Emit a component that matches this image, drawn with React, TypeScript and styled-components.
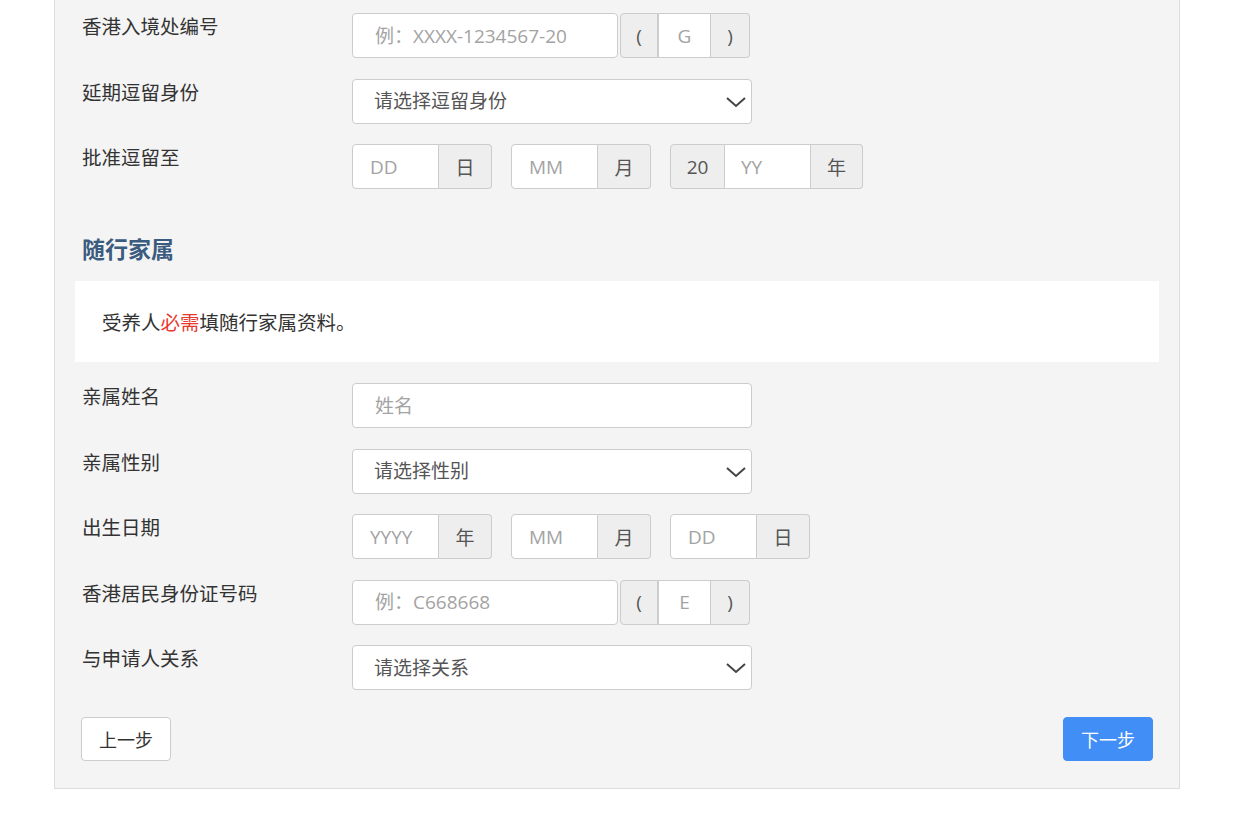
import styled, { createGlobalStyle } from 'styled-components'

const GlobalStyle = createGlobalStyle`
  html, body {
    margin: 0;
    padding: 0;
    background: #fff;
    font-family: "Open Sans", "Noto Sans CJK SC", sans-serif;
    color: #333;
  }
  * { box-sizing: border-box; }
`

const Page = styled.div`
  display: flex;
  align-items: flex-end;
  width: 1250px;
`

const Panel = styled.div`
  margin-left: 54px;
  width: 1126px;
  background: #f4f4f4;
  border: 1px solid #dddddd;
  border-top: none;
  padding: 13px 27px 27px 27px;
`

const SideLine = styled.div`
  margin-left: 7px;
  flex: 1;
  height: 1px;
  background: #eeeeee;
  margin-bottom: -1px;
`

const Row = styled.div`
  display: grid;
  grid-template-columns: 270px 1fr;
  margin-bottom: 20.5px;
`

const Label = styled.label`
  font-size: 19.5px;
  line-height: 28px;
  color: #333;
`

const Controls = styled.div<{ gap?: number }>`
  display: flex;
  align-items: center;
  gap: ${(p) => p.gap ?? 0}px;
`

const Group = styled.div`
  display: flex;
`

const Input = styled.input<{ w: number; pad?: number; center?: boolean; round?: string; noLeft?: boolean }>`
  width: ${(p) => p.w}px;
  height: 45px;
  border: 1px solid #cccccc;
  border-left: ${(p) => (p.noLeft ? 'none' : '1px solid #cccccc')};
  border-radius: ${(p) => p.round ?? '4px'};
  background: #fff;
  padding: 0 ${(p) => p.pad ?? 22}px;
  font-family: inherit;
  font-size: 19px;
  color: #555;
  text-align: ${(p) => (p.center ? 'center' : 'left')};
  outline: none;
  &::placeholder {
    color: #a3a3a3;
  }
`

const Addon = styled.span<{ w: number; round?: string; noLeft?: boolean }>`
  display: flex;
  align-items: center;
  justify-content: center;
  width: ${(p) => p.w}px;
  height: 45px;
  background: #eeeeee;
  border: 1px solid #cccccc;
  border-left: ${(p) => (p.noLeft ? 'none' : '1px solid #cccccc')};
  border-radius: ${(p) => p.round ?? '0'};
  font-size: 19px;
  color: #555;
`

const SelectWrap = styled.div`
  position: relative;
  width: 400px;
`

const Select = styled.select`
  appearance: none;
  width: 100%;
  height: 45px;
  border: 1px solid #cccccc;
  border-radius: 4px;
  background: #fff;
  padding: 0 40px 0 21px;
  font-family: inherit;
  font-size: 19px;
  color: #555;
  outline: none;
`

const Chevron = styled.svg`
  position: absolute;
  right: 3px;
  top: 15px;
  pointer-events: none;
`

const Heading = styled.h3`
  margin: 44px 0 16px 0;
  font-size: 23px;
  line-height: 32px;
  font-weight: 700;
  color: #3b5b7f;
`

const Notice = styled.div`
  margin: 0 -7px 21px -7px;
  height: 81px;
  background: #fff;
  display: flex;
  align-items: center;
  padding-left: 27px;
  font-size: 19.5px;
  color: #333;
`

const Red = styled.span`
  color: #e8392f;
`

const Footer = styled.div`
  display: flex;
  justify-content: space-between;
  padding-top: 6px;
`

const Button = styled.button<{ primary?: boolean }>`
  width: 90px;
  height: 44px;
  border-radius: 4px;
  font-family: inherit;
  font-size: 18px;
  cursor: pointer;
  border: 1px solid ${(p) => (p.primary ? '#428ef7' : '#cccccc')};
  background: ${(p) => (p.primary ? '#428ef7' : '#ffffff')};
  color: ${(p) => (p.primary ? '#ffffff' : '#333333')};
  margin-left: ${(p) => (p.primary ? '0' : '-1px')};
  margin-right: ${(p) => (p.primary ? '-1px' : '0')};
`

const Dropdown = ({ text }: { text: string }) => (
  <SelectWrap>
    <Select defaultValue=''>
      <option value=''>{text}</option>
    </Select>
    <Chevron width='26' height='16' viewBox='0 0 26 16'>
      <path d='M4 4 L13 12 L22 4' fill='none' stroke='#444' strokeWidth='2' />
    </Chevron>
  </SelectWrap>
)

const DateField = ({ placeholder, unit }: { placeholder: string; unit: string }) => (
  <Group>
    <Input w={87} pad={17} placeholder={placeholder} round='4px 0 0 4px' />
    <Addon w={53} round='0 4px 4px 0' noLeft>
      {unit}
    </Addon>
  </Group>
)

const IdField = ({ placeholder, check }: { placeholder: string; check: string }) => (
  <Controls gap={2}>
    <Input w={266} placeholder={placeholder} />
    <Group>
      <Addon w={38} round='4px 0 0 4px'>(</Addon>
      <Input w={53} pad={0} center placeholder={check} round='0' />
      <Addon w={39} round='0 4px 4px 0' noLeft>)</Addon>
    </Group>
  </Controls>
)

export default function App() {
  return (
    <>
      <GlobalStyle />
      <Page>
        <Panel>
          <Row>
            <Label>香港入境处编号</Label>
            <IdField placeholder='例：XXXX-1234567-20' check='G' />
          </Row>
          <Row>
            <Label>延期逗留身份</Label>
            <Dropdown text='请选择逗留身份' />
          </Row>
          <Row>
            <Label>批准逗留至</Label>
            <Controls gap={19}>
              <DateField placeholder='DD' unit='日' />
              <DateField placeholder='MM' unit='月' />
              <Group>
                <Addon w={55} round='4px 0 0 4px'>20</Addon>
                <Input w={86} pad={16} placeholder='YY' round='0' noLeft />
                <Addon w={52} round='0 4px 4px 0' noLeft>年</Addon>
              </Group>
            </Controls>
          </Row>

          <Heading>随行家属</Heading>
          <Notice>
            受养人<Red>必需</Red>填随行家属资料。
          </Notice>

          <Row>
            <Label>亲属姓名</Label>
            <Input w={400} placeholder='姓名' />
          </Row>
          <Row>
            <Label>亲属性别</Label>
            <Dropdown text='请选择性别' />
          </Row>
          <Row>
            <Label>出生日期</Label>
            <Controls gap={19}>
              <DateField placeholder='YYYY' unit='年' />
              <DateField placeholder='MM' unit='月' />
              <DateField placeholder='DD' unit='日' />
            </Controls>
          </Row>
          <Row>
            <Label>香港居民身份证号码</Label>
            <IdField placeholder='例：C668668' check='E' />
          </Row>
          <Row>
            <Label>与申请人关系</Label>
            <Dropdown text='请选择关系' />
          </Row>

          <Footer>
            <Button>上一步</Button>
            <Button primary>下一步</Button>
          </Footer>
        </Panel>
        <SideLine />
      </Page>
    </>
  )
}
